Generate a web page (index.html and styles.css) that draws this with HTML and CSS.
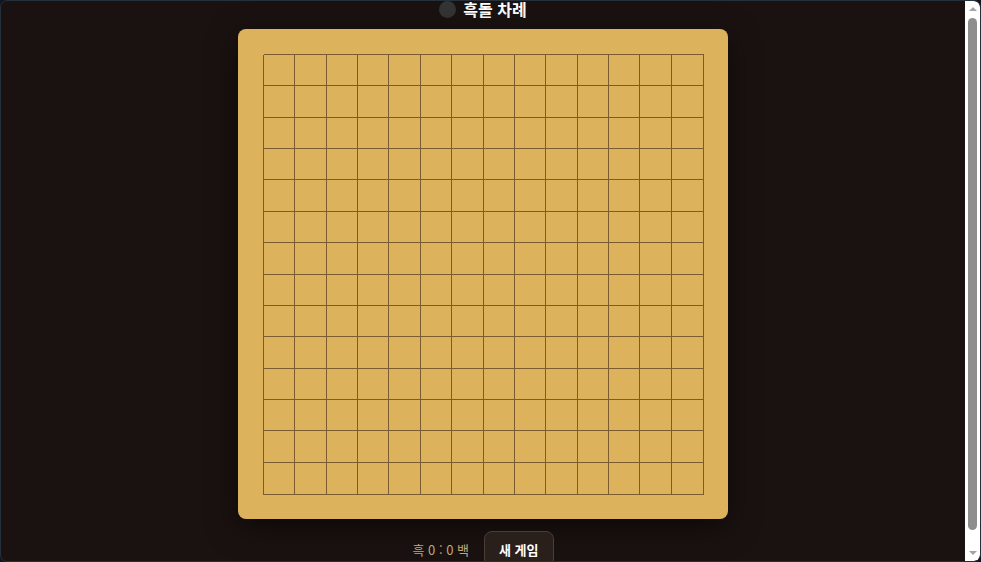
FILE: index.html
```html
<!DOCTYPE html>
<html lang="ko">
<head>
<meta charset="utf-8">
<title>오목</title>
<link rel="stylesheet" href="styles.css">
</head>
<body>
<div class="frame">
  <main class="game">
    <h1 class="status"><span class="stone"></span><span>흑돌 차례</span></h1>
    <div class="board">
      <svg class="grid" width="441" height="441" viewBox="0 0 441 441">
        <path d="M0.5 0.5H440.5M0.5 31.9H440.5M0.5 63.2H440.5M0.5 94.6H440.5M0.5 125.9H440.5M0.5 157.3H440.5M0.5 188.6H440.5M0.5 220H440.5M0.5 251.4H440.5M0.5 282.7H440.5M0.5 314.1H440.5M0.5 345.4H440.5M0.5 376.8H440.5M0.5 408.1H440.5M0.5 440.5H440.5M0.5 0.5V440.5M31.9 0.5V440.5M63.2 0.5V440.5M94.6 0.5V440.5M125.9 0.5V440.5M157.3 0.5V440.5M188.6 0.5V440.5M220 0.5V440.5M251.4 0.5V440.5M282.7 0.5V440.5M314.1 0.5V440.5M345.4 0.5V440.5M376.8 0.5V440.5M408.1 0.5V440.5M440.5 0.5V440.5" stroke="#7a5c30" stroke-width="1" fill="none" shape-rendering="crispEdges"/>
      </svg>
    </div>
    <div class="controls">
      <span class="score">흑 0 : 0 백</span>
      <button class="new-game">새 게임</button>
    </div>
  </main>
  <div class="scrollbar" aria-hidden="true">
    <span class="arrow arrow-up"></span>
    <span class="thumb"></span>
    <span class="arrow arrow-down"></span>
  </div>
</div>
</body>
</html>
```
FILE: styles.css
```css
html, body {
  margin: 0;
  padding: 0;
  height: 100%;
  background: #0f1620;
}
.frame {
  box-sizing: border-box;
  height: 100vh;
  display: flex;
  border: 1px solid #25303d;
  border-radius: 7px;
  background: #1a1210;
  overflow: hidden;
  font-family: "Noto Sans CJK KR", "Noto Sans", sans-serif;
}
.game {
  flex: 1;
  display: flex;
  flex-direction: column;
  align-items: center;
  overflow: hidden;
}
.status {
  display: flex;
  align-items: center;
  gap: 7px;
  margin: 0;
  height: 17px;
  font-size: 16px;
  font-weight: 700;
  line-height: 17px;
  color: #ffffff;
}
.stone {
  width: 17px;
  height: 17px;
  border-radius: 50%;
  background: #343434;
  box-shadow: 0 0 0 1px #151515;
}
.board {
  margin-top: 11px;
  flex-shrink: 0;
  width: 490px;
  height: 490px;
  box-sizing: border-box;
  padding: 25px 0 0 25px;
  background: #dcb35c;
  border-radius: 8px;
  box-shadow: 0 8px 30px rgba(0, 0, 0, 0.55);
}
.grid {
  display: block;
}
.controls {
  display: flex;
  align-items: center;
  gap: 15px;
  margin-top: 12px;
  flex-shrink: 0;
}
.score {
  font-size: 13px;
  color: #c2a57c;
}
.new-game {
  font-family: inherit;
  font-size: 13px;
  font-weight: 700;
  color: #ffffff;
  background: #2a201b;
  border: 1px solid #4a3d33;
  border-radius: 8px;
  padding: 0 14px;
  height: 36px;
  cursor: pointer;
}
.scrollbar {
  width: 15px;
  flex-shrink: 0;
  background: #ffffff;
  display: flex;
  flex-direction: column;
  align-items: center;
  border-top-right-radius: 6px;
  border-bottom-right-radius: 6px;
}
.arrow {
  width: 0;
  height: 0;
  border-left: 4px solid transparent;
  border-right: 4px solid transparent;
}
.arrow-up {
  margin-top: 6px;
  border-bottom: 4px solid #a3a3a3;
}
.arrow-down {
  margin-top: 21px;
  margin-bottom: 6px;
  border-top: 4px solid #a3a3a3;
}
.thumb {
  flex: 1;
  width: 9px;
  margin-top: 7px;
  border-radius: 5px;
  background: #8e8e8e;
}
```
